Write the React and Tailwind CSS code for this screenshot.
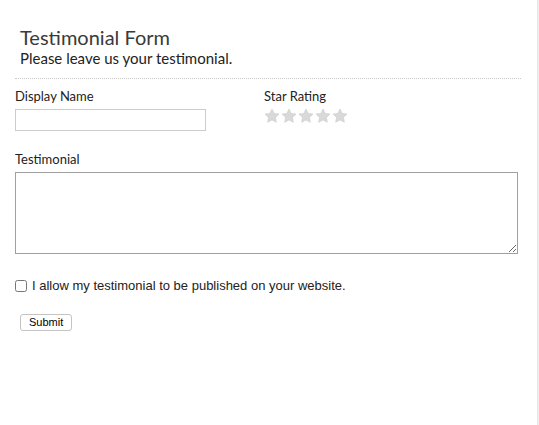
import React from 'react';

function Star() {
  return (
    <svg width="16" height="16" viewBox="0 0 24 24" className="block">
      <path
        d="M12 1.5l3.2 6.7 7.3.9-5.3 5 1.3 7.3L12 17.9l-6.5 3.5 1.3-7.3-5.3-5 7.3-.9z"
        fill="#d9d9d9"
        stroke="#cdcdcd"
        strokeWidth="1"
        strokeLinejoin="round"
      />
    </svg>
  );
}

export default function App() {
  return (
    <div className="w-[539px] h-[425px] bg-white flex text-[#333]" style={{ fontFamily: 'Lato, "Liberation Sans", sans-serif' }}>
      <div className="flex-1 pl-[15px] pr-[16px] pt-[26px]">
        {/* header */}
        <div className="pl-[5px] pb-[11px] border-b border-dotted border-[#c8c8c8]">
          <h1 className="text-[20px] leading-[22px] text-[#3a3a3a]">Testimonial Form</h1>
          <p className="mt-[1px] text-[15px] leading-[18px] text-[#222]">Please leave us your testimonial.</p>
        </div>

        {/* name + rating */}
        <div className="flex mt-[9px]">
          <div className="w-[249px]">
            <label className="block text-[13px] leading-[16px] text-[#222]">Display Name</label>
            <input type="text" className="mt-[5px] w-[191px] h-[22px] border border-[#ccc] outline-none" />
          </div>
          <div>
            <label className="block text-[13px] leading-[16px] text-[#222]">Star Rating</label>
            <div className="flex mt-[4px] gap-[1px]">
              <Star />
              <Star />
              <Star />
              <Star />
              <Star />
            </div>
          </div>
        </div>

        {/* testimonial */}
        <label className="block mt-[19px] text-[13px] leading-[16px] text-[#222]">Testimonial</label>
        <textarea className="block mt-[5px] w-[503px] h-[82px] border border-[#a0a0a0] outline-none resize-y" />

        {/* consent */}
        <label className="flex items-center mt-[22px] text-[13px] text-[#222]" style={{ fontFamily: '"Liberation Sans", Arial, sans-serif' }}>
          <input type="checkbox" className="m-0 w-[12px] h-[12px]" />
          <span className="ml-[5px]">I allow my testimonial to be published on your website.</span>
        </label>

        <button
          className="mt-[18px] ml-[5px] px-[8px] h-[17px] text-[11px] leading-[15px] text-black bg-white border border-[#c4c4c4] rounded-[3px]"
          style={{ fontFamily: '"Liberation Sans", Arial, sans-serif' }}
        >
          Submit
        </button>
      </div>
      <div className="w-[2px] bg-[#f0f0f0] border-l border-[#e6e6e6]" />
    </div>
  );
}
